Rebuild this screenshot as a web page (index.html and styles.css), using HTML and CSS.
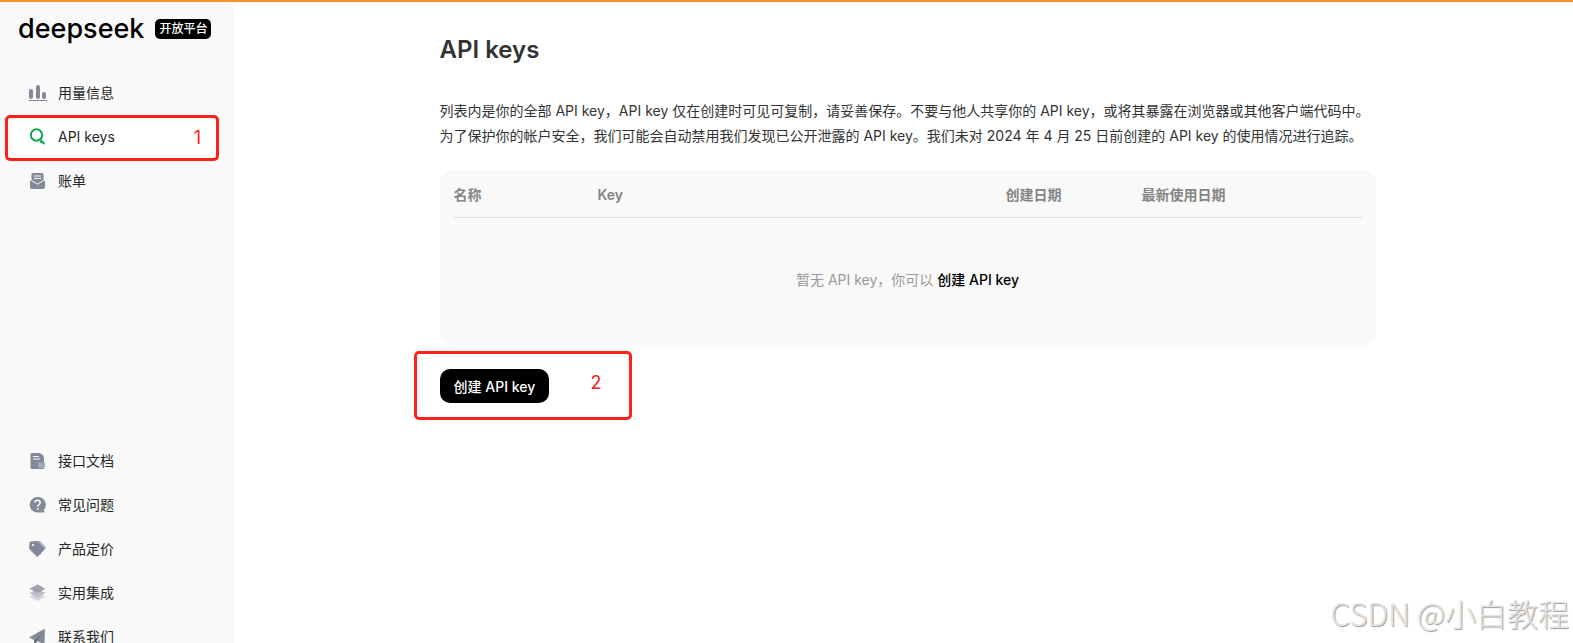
FILE: index.html
```
<!DOCTYPE html>
<html lang="zh-CN">
<head>
    <meta charset="UTF-8">
    <meta name="viewport" content="width=device-width, initial-scale=1.0">
    <title>API keys</title>
    <link rel="stylesheet" href="styles.css">
</head>
<body>

    <div class="layout">
        <aside class="sidebar">
            <div class="brand">
                <span class="brand-name">deepseek</span>
                <span class="brand-tag">开放平台</span>
            </div>

            <nav class="menu">
                <a href="#usage" class="menu-item">
                    <svg class="icon" viewBox="0 0 18 18" fill="#858899">
                        <rect x="0" y="5" width="4" height="10" rx="2"/>
                        <rect x="7" y="1" width="4" height="14" rx="2"/>
                        <rect x="13" y="8" width="4" height="7" rx="2"/>
                        <rect x="0" y="16" width="18" height="1"/>
                    </svg>
                    用量信息
                </a>
                <a href="#keys" class="menu-item active">
                    <svg class="icon" viewBox="0 0 18 18" fill="none" stroke="#0fa650" stroke-width="2">
                        <circle cx="7.500" cy="7" r="5.700"/>
                        <path d="M10.500 11l5 5M13 13.200l-1.400 1.800"/>
                    </svg>
                    API keys
                    <span class="mark mark-menu">1</span>
                </a>
                <a href="#bills" class="menu-item">
                    <svg class="icon" viewBox="0 0 18 18">
                        <path d="M4 1h9a1.500 1.500 0 0 1 1.500 1.500V9l-6 4-6-4V2.500A1.500 1.500 0 0 1 4 1z" fill="#858899"/>
                        <path d="M5 4h7M5 6.500h7" stroke="#f9f9f9"/>
                        <path d="M1 8l7.500 4.500L16 8v7q0 2-2 2H3q-2 0-2-2z" fill="#858899"/>
                        <path d="M1 7.500l7.500 4.700L16 7.500" fill="none" stroke="#f9f9f9"/>
                    </svg>
                    账单
                </a>
            </nav>

            <nav class="menu menu-links">
                <a href="#docs" class="menu-item">
                    <svg class="icon" viewBox="0 0 18 18">
                        <path d="M3 1h7q5 1 5 6v10H3q-1.500 0-1.500-1.500v-13Q1.500 1 3 1z" fill="#858899"/>
                        <path d="M4 4.500h6M4 7h7" stroke="#f9f9f9" stroke-width="1.200"/>
                        <path d="M9 10.500h7V14q0 2-2 2H9z" fill="#a5a8b8"/>
                    </svg>
                    接口文档
                </a>
                <a href="#faq" class="menu-item">
                    <svg class="icon" viewBox="0 0 18 18">
                        <path d="M8.500 1a7.800 7.800 0 1 0 0 15.600h7V15l-1-.8A7.800 7.800 0 0 0 8.500 1z" fill="#858899"/>
                        <path d="M6 6.800q0-2.500 2.600-2.500t2.600 2.200q0 1.300-1.300 2.100-1.200.8-1.200 2.200" fill="none" stroke="#fff" stroke-width="1.400"/>
                        <circle cx="8.700" cy="13" r=".9" fill="#fff"/>
                    </svg>
                    常见问题
                </a>
                <a href="#pricing" class="menu-item">
                    <svg class="icon" viewBox="0 0 18 18">
                        <path d="M7 1h4l5.500 5.500q.8 1 0 2L11 15z" fill="#b3b5c4"/>
                        <path d="M1.500 1.500L7 1q1.300 0 2 .7l6 6q.8.900 0 1.800l-6 6.900q-.7.700-1.400 0L.8 9.500Q0 8.800.1 7.700L.5 2.500q.1-.9 1-1z" fill="#858899"/>
                        <circle cx="4" cy="5" r="1.100" fill="#fff"/>
                    </svg>
                    产品定价
                </a>
                <a href="#integrations" class="menu-item">
                    <svg class="icon" viewBox="0 0 18 18">
                        <path d="M8.500 8.500l8 4-8 4.500-8-4.500z" fill="#d5d6de"/>
                        <path d="M8.500 5l8 4-8 4.500-8-4.500z" fill="#bcbecb"/>
                        <path d="M8.500.5l8 4.200-8 4.300-8-4.300z" fill="#9ea0ae"/>
                    </svg>
                    实用集成
                </a>
                <a href="#contact" class="menu-item">
                    <svg class="icon" viewBox="0 0 18 18">
                        <path d="M16 .5L0 9.500l5 2.500z" fill="#858899"/>
                        <path d="M16 .5L5 12v5l3-3z" fill="#6d7083"/>
                        <path d="M16 .5L8 13l7.500 3.500z" fill="#858899"/>
                    </svg>
                    联系我们
                </a>
            </nav>
        </aside>

        <main class="main">
            <div class="content">
                <h1>API keys</h1>
                <p class="intro">
                    列表内是你的全部 API key，API key 仅在创建时可见可复制，请妥善保存。不要与他人共享你的 API key，或将其暴露在浏览器或其他客户端代码中。<br>
                    为了保护你的帐户安全，我们可能会自动禁用我们发现已公开泄露的 API key。我们未对 2024 年 4 月 25 日前创建的 API key 的使用情况进行追踪。
                </p>

                <div class="card">
                    <table>
                        <thead>
                            <tr>
                                <th class="col-name">名称</th>
                                <th class="col-key">Key</th>
                                <th class="col-created">创建日期</th>
                                <th>最新使用日期</th>
                            </tr>
                        </thead>
                        <tbody>
                            <tr>
                                <td colspan="4" class="empty">暂无 API key，你可以 <a href="#create">创建 API key</a></td>
                            </tr>
                        </tbody>
                    </table>
                </div>

                <div class="actions">
                    <button type="button" class="create-button">创建 API key</button>
                    <span class="mark mark-create">2</span>
                </div>
            </div>
        </main>
    </div>

    <div class="watermark">CSDN @小白教程</div>

</body>
</html>
```
FILE: styles.css
```
* {
    box-sizing: border-box;
}

body {
    margin: 0;
    height: 100vh;
    overflow: hidden;
    border-top: 2px solid #ff9228;
    background: #fff;
    color: #333;
    font-family: Inter, "Noto Sans CJK SC", sans-serif;
    font-size: 14px;
}

.layout {
    display: flex;
    height: 100%;
}

/* Sidebar */
.sidebar {
    flex: 0 0 235px;
    padding: 0 17px 0 11px;
    background: #f9f9f9;
}

.brand {
    display: flex;
    align-items: center;
    gap: 11px;
    height: 57px;
    padding: 0 0 2px 7px;
    border-bottom: 1px solid #f3f3f3;
    color: #000;
}

.brand-name {
    font-size: 27px;
    font-weight: 500;
    line-height: 32px;
}

.brand-tag {
    padding: 0 4px;
    border-radius: 5px;
    background: #000;
    color: #fff;
    font-size: 12px;
    font-weight: 500;
    line-height: 20px;
    white-space: nowrap;
}

.menu {
    display: flex;
    flex-direction: column;
    gap: 4px;
    margin-top: 14px;
}

.menu-links {
    margin-top: 240px;
}

.menu-item {
    display: flex;
    align-items: center;
    gap: 11px;
    position: relative;
    height: 40px;
    padding-left: 18px;
    border-radius: 12px;
    color: #262626;
    line-height: 20px;
    text-decoration: none;
}

.menu-item.active {
    background: #fff;
}

.icon {
    width: 18px;
    height: 18px;
}

/* Numbered red frames */
.mark {
    position: absolute;
    border: 3px solid #ff201c;
    border-radius: 5px;
    color: #ff201c;
    font-size: 18px;
    text-align: right;
    pointer-events: none;
}

.mark-menu {
    inset: -2px -1px -4px -6px;
    padding-right: 15px;
    line-height: 40px;
}

.mark-create {
    top: -18px;
    left: -26px;
    width: 218px;
    height: 69px;
    padding-right: 27px;
    line-height: 58px;
}

/* Content */
.main {
    flex: 1;
    padding: 32px 0 0 7px;
}

.content {
    width: 936px;
    max-width: 100%;
    margin: 0 auto;
}

h1 {
    margin: 0;
    font-size: 24px;
    font-weight: 600;
    line-height: 32px;
}

.intro {
    margin: 32px 0 22px;
    line-height: 25px;
}

.card {
    height: 175px;
    padding: 0 14px;
    border-radius: 12px;
    background: #f9f9f9;
}

table {
    width: 100%;
    border-collapse: collapse;
    table-layout: fixed;
}

th {
    height: 47px;
    padding: 4px 0 0;
    border-bottom: 1px solid #dedede;
    color: #858585;
    font-weight: 600;
    text-align: left;
    line-height: 22px;
}

.col-name {
    width: 144px;
}

.col-key {
    width: 408px;
}

.col-created {
    width: 136px;
}

.empty {
    height: 124px;
    padding: 0;
    color: #999;
    text-align: center;
}

.empty a {
    color: #000;
    font-weight: 500;
    text-decoration: none;
}

.actions {
    position: relative;
    margin-top: 24px;
}

.create-button {
    height: 34px;
    padding: 0 14px;
    border: 0;
    border-radius: 10px;
    background: #000;
    color: #fff;
    font: inherit;
    font-weight: 500;
    cursor: pointer;
}

.watermark {
    position: absolute;
    right: 4px;
    bottom: 6px;
    color: #e4e4e4;
    font-family: "Noto Sans CJK SC", sans-serif;
    font-size: 31px;
    font-weight: 300;
    line-height: 48px;
    text-shadow: 1px 1px 1px #999;
}
```
